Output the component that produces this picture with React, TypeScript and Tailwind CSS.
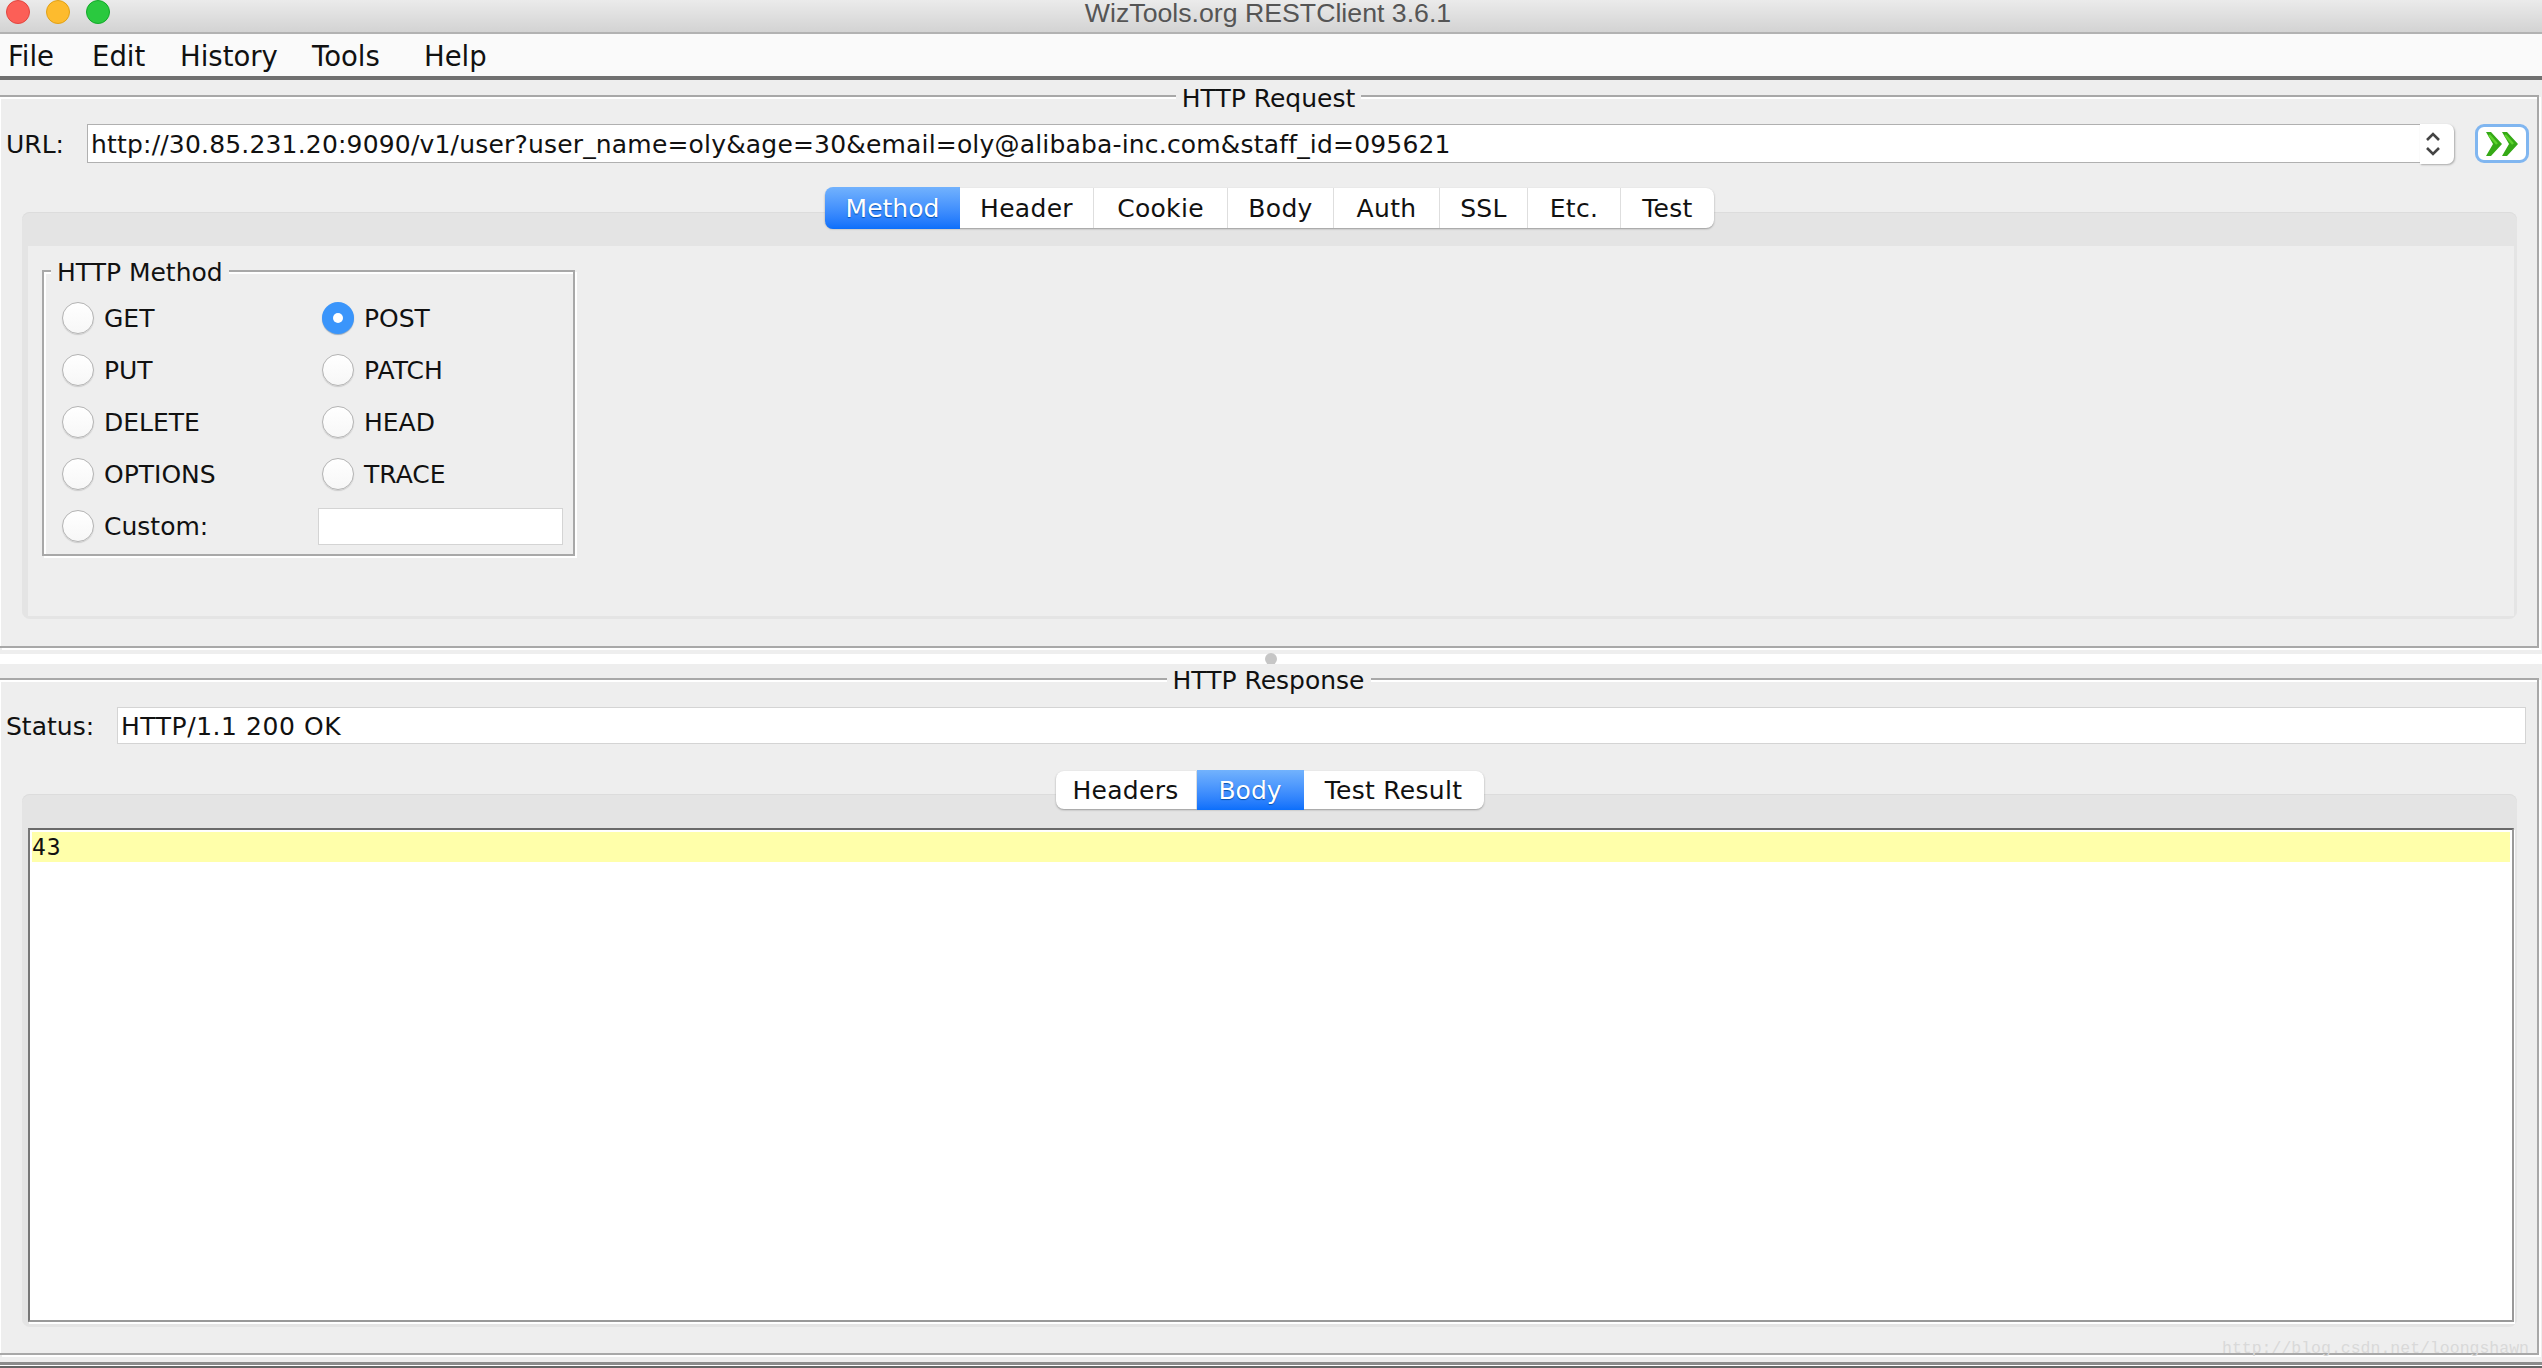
import React from "react";

function Radio({ on }: { on?: boolean }) {
  return on ? (
    <span className="flex h-[32px] w-[32px] items-center justify-center rounded-full bg-[#3a95fb] shadow-[0_1px_1px_#9ab]">
      <span className="h-[10px] w-[10px] rounded-full bg-white" />
    </span>
  ) : (
    <span className="block h-[32px] w-[32px] rounded-full border border-[#b4b4b4] bg-gradient-to-b from-white to-[#f7f7f7] shadow-[0_1px_1px_#ccc]" />
  );
}

function Opt({ label, on }: { label: string; on?: boolean }) {
  return (
    <div className="flex h-[52px] items-center gap-[10px]">
      <Radio on={on} />
      <span className="pt-[2px]">{label}</span>
    </div>
  );
}

function Tabs({ items }: { items: { t: string; w: number; on?: boolean }[] }) {
  return (
    <div className="flex h-full rounded-[8px] bg-white shadow-[0_1px_2px_#999]">
      {items.map((it) => (
        <div
          key={it.t}
          style={{ width: it.w }}
          className={
            it.on
              ? "flex -my-[1px] items-center justify-center bg-gradient-to-b from-[#72b2fd] to-[#0a6ffb] pt-[2px] text-white [text-shadow:0_1px_1px_#0450b0] first:rounded-l-[8px]"
              : "flex items-center justify-center border-r border-[#dedede] pt-[2px] tracking-[0.3px] text-[#111] last:border-r-0"
          }
        >
          {it.t}
        </div>
      ))}
    </div>
  );
}

const etched = "shadow-[2px_2px_0_#fff,inset_2px_2px_0_#fff]";

export default function App() {
  return (
    <div className="relative flex h-[1368px] w-[2542px] flex-col overflow-hidden bg-[#eeeeee] font-['DejaVu_Sans',sans-serif] text-[25px] text-[#111]">
      {/* title bar */}
      <div className="relative flex h-[34px] shrink-0 items-start justify-center border-b-2 border-[#b2b2b2] bg-gradient-to-b from-[#ebebeb] to-[#d3d3d3] pr-[6px] font-['Liberation_Sans',sans-serif] text-[26.7px] leading-[27px] text-[#555]">
        <div className="absolute left-[6px] top-0 flex gap-[16px]">
          <span className="h-[24px] w-[24px] rounded-full border border-[#e2463f] bg-[#fc5f57]" />
          <span className="h-[24px] w-[24px] rounded-full border border-[#e1a116] bg-[#fdbb2e]" />
          <span className="h-[24px] w-[24px] rounded-full border border-[#12a929] bg-[#2ac93f]" />
        </div>
        <span>WizTools.org RESTClient 3.6.1</span>
      </div>

      {/* menu bar */}
      <div className="flex h-[46px] shrink-0 items-center border-b-4 border-[#707070] bg-[#fafafa] pl-[8px] pt-[4px] text-[27.5px] leading-none">
        <span className="w-[84px]">File</span>
        <span className="w-[88px]">Edit</span>
        <span className="w-[132px]">History</span>
        <span className="w-[112px]">Tools</span>
        <span>Help</span>
      </div>

      {/* request */}
      <fieldset className="h-[568px] w-[2539px] shrink-0 border-2 border-l-0 border-[#a8a8a8] shadow-[2px_2px_0_#fff,inset_1px_2px_0_#fff]">
        <legend className="mx-auto bg-[#eeeeee] px-[6px] pt-[6px] text-[25px] leading-[26px]">HTTP Request</legend>
        <div className="mt-[11px] flex h-[41px] items-center pl-[6px] pr-[8px]">
          <span className="w-[81px] shrink-0 pt-[2px]">URL:</span>
          <div className="flex h-[39px] flex-1 items-center border border-r-0 border-[#b0b0b0] bg-white pl-[3px] pt-[2px] tracking-[0.18px]">
            http://30.85.231.20:9090/v1/user?user_name=oly&amp;age=30&amp;email=oly@alibaba-inc.com&amp;staff_id=095621
          </div>
          <div className="flex h-[40px] w-[34px] shrink-0 items-center justify-center rounded-r-[7px] bg-white pr-[8px] shadow-[1px_1px_2px_#aaa]">
            <svg width="16" height="24" viewBox="0 0 16 24" fill="none" stroke="#444" strokeWidth="2.6">
              <path d="M2 8l6-6 6 6M2 16l6 6 6-6" />
            </svg>
          </div>
          <div className="ml-[21px] flex h-[39px] w-[54px] shrink-0 items-center justify-center rounded-[9px] border-[3px] border-[#80b6f0] bg-white">
            <svg width="34" height="24" viewBox="0 0 34 24">
              <path d="M1 0h5l11 12-11 12H1l7-12z" fill="#35a916" />
              <path d="M17 0h5l11 12-11 12h-5l7-12z" fill="#35a916" />
              <path d="M4 3l8 9M20 3l8 9" stroke="#5fd32e" strokeWidth="2.5" />
            </svg>
          </div>
        </div>

        <div className="relative z-10 mt-[24px] flex h-[40px] justify-center pl-[2px]">
          <Tabs
            items={[
              { t: "Method", w: 135, on: true },
              { t: "Header", w: 134 },
              { t: "Cookie", w: 134 },
              { t: "Body", w: 106 },
              { t: "Auth", w: 106 },
              { t: "SSL", w: 88 },
              { t: "Etc.", w: 93 },
              { t: "Test", w: 93 },
            ]}
          />
        </div>
        <div className="ml-[22px] mr-[20px] -mt-[16px] h-[407px] rounded-[8px] bg-[#e4e4e4] pb-[3px] pl-[6px] pr-[3px] pt-[34px] shadow-[inset_0_1px_0_#dcdcdc]">
          <div className="h-full bg-[#eeeeee] pl-[14px] pt-[9px]">
            <fieldset className={`h-[301px] w-[533px] border-2 border-[#a8a8a8] ${etched}`}>
              <legend className="ml-[7px] bg-[#eeeeee] px-[6px] pt-[4px] text-[25px] leading-[28px]">HTTP Method</legend>
              <div className="mt-[5px] grid grid-cols-[260px_1fr] pl-[18px]">
                <Opt label="GET" />
                <Opt label="POST" on />
                <Opt label="PUT" />
                <Opt label="PATCH" />
                <Opt label="DELETE" />
                <Opt label="HEAD" />
                <Opt label="OPTIONS" />
                <Opt label="TRACE" />
                <Opt label="Custom:" />
                <div className="flex h-[52px] items-center">
                  <div className="-ml-[4px] h-[37px] w-[245px] border border-[#d4d4d4] bg-white" />
                </div>
              </div>
            </fieldset>
          </div>
        </div>
      </fieldset>

      {/* divider */}
      <div className="mt-[6px] flex h-[10px] shrink-0 items-center justify-center bg-white pb-[1px]">
        <span className="h-[12px] w-[12px] rounded-full bg-[#c6c6c6]" />
      </div>

      {/* response */}
      <fieldset className="h-[691px] w-[2539px] shrink-0 border-2 border-l-0 border-[#a8a8a8] shadow-[2px_2px_0_#fff,inset_1px_2px_0_#fff]">
        <legend className="mx-auto bg-[#eeeeee] px-[6px] pt-[4px] text-[25px] leading-[26px]">HTTP Response</legend>
        <div className="mt-[13px] flex h-[37px] items-center pl-[6px] pr-[11px]">
          <span className="w-[111px] shrink-0 pt-[2px]">Status:</span>
          <div className="flex h-[37px] flex-1 items-center border border-[#d4d4d4] bg-white pl-[3px] pt-[2px] tracking-[0.55px]">HTTP/1.1 200 OK</div>
        </div>
        <div className="relative z-10 mt-[27px] flex h-[38px] justify-center pl-[2px]">
          <Tabs
            items={[
              { t: "Headers", w: 141 },
              { t: "Body", w: 107, on: true },
              { t: "Test Result", w: 180 },
            ]}
          />
        </div>
        <div className="ml-[22px] mr-[20px] -mt-[15px] h-[533px] rounded-[8px] bg-[#e4e4e4] pb-[3px] pl-[6px] pr-[3px] pt-[34px] shadow-[inset_0_1px_0_#dcdcdc]">
          <div className="h-[494px] border-2 border-b-[#999999] border-l-[#777777] border-r-[#999999] border-t-[#6a6a6a] bg-white p-[2px] shadow-[1px_2px_0_#fff]">
            <div className="flex h-[30px] items-center bg-[#ffffaa] font-['DejaVu_Sans_Mono',monospace] text-[23px] tracking-[1px]">43</div>
          </div>
        </div>
      </fieldset>

      {/* bottom edge */}
      <div className="mt-[7px] h-[3px] shrink-0 bg-[#8c8c8c]" />
      <div className="h-[1px] shrink-0 bg-white" />
      <div className="h-[2px] shrink-0 bg-[#666666]" />

      <span className="absolute left-[2222px] top-[1337px] font-['Liberation_Mono',monospace] text-[16.5px] text-[#d9d9d9]">
        http://blog.csdn.net/loongshawn
      </span>
    </div>
  );
}
